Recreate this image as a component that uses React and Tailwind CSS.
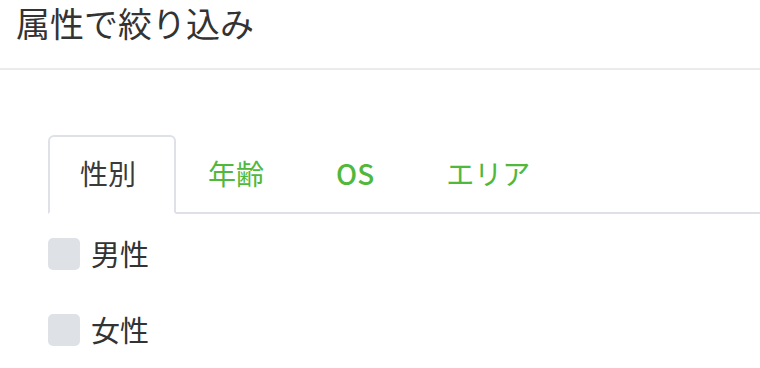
import { useState } from 'react';

const tabs = [
    { key: 'gender', label: '性別' },
    { key: 'age', label: '年齢' },
    { key: 'os', label: 'OS' },
    { key: 'area', label: 'エリア' },
];

const genders = ['男性', '女性'];

export default function App() {
    const [active, setActive] = useState('gender');
    const [checked, setChecked] = useState({});

    return (
        <div className="w-[760px] h-[368px] bg-white text-[#333]" style={{ fontFamily: '"Noto Sans CJK JP", "Noto Sans", sans-serif' }}>
            {/* Header */}
            <div className="h-[70px] border-b-2 border-[#ebebeb] pl-[16px] pt-[1px]">
                <h1 className="text-[34px] leading-[44px] font-normal whitespace-nowrap">属性で絞り込み</h1>
            </div>

            {/* Tabs */}
            <ul className="flex ml-[48px] mt-[65px] border-b-2 border-[#dee2e6]">
                {tabs.map(t => (
                    <li key={t.key} className="-mb-[2px]">
                        <button
                            onClick={() => setActive(t.key)}
                            className={`h-[79px] pl-[30px] pr-[38px] pb-[3px] flex items-center text-[28px] leading-none border-2 rounded-t-[6px] ${active === t.key ? 'border-[#dee2e6] border-b-white bg-white text-[#3a3a3a]' : 'border-transparent text-[#50b83c]'} ${t.key === 'os' ? 'font-medium' : ''}`}
                        >
                            {t.label}
                        </button>
                    </li>
                ))}
            </ul>

            {/* Checkboxes */}
            <div className="ml-[48px] mt-[24px] flex flex-col gap-[44px]">
                {genders.map(g => (
                    <label key={g} className="flex items-center cursor-pointer">
                        <span
                            onClick={() => setChecked({ ...checked, [g]: !checked[g] })}
                            className={`w-[32px] h-[32px] rounded-[5px] ${checked[g] ? 'bg-[#50b83c]' : 'bg-[#dee2e6]'}`}
                        />
                        <span className="ml-[11px] text-[29px] leading-none pb-[2px]">{g}</span>
                    </label>
                ))}
            </div>
        </div>
    );
}
